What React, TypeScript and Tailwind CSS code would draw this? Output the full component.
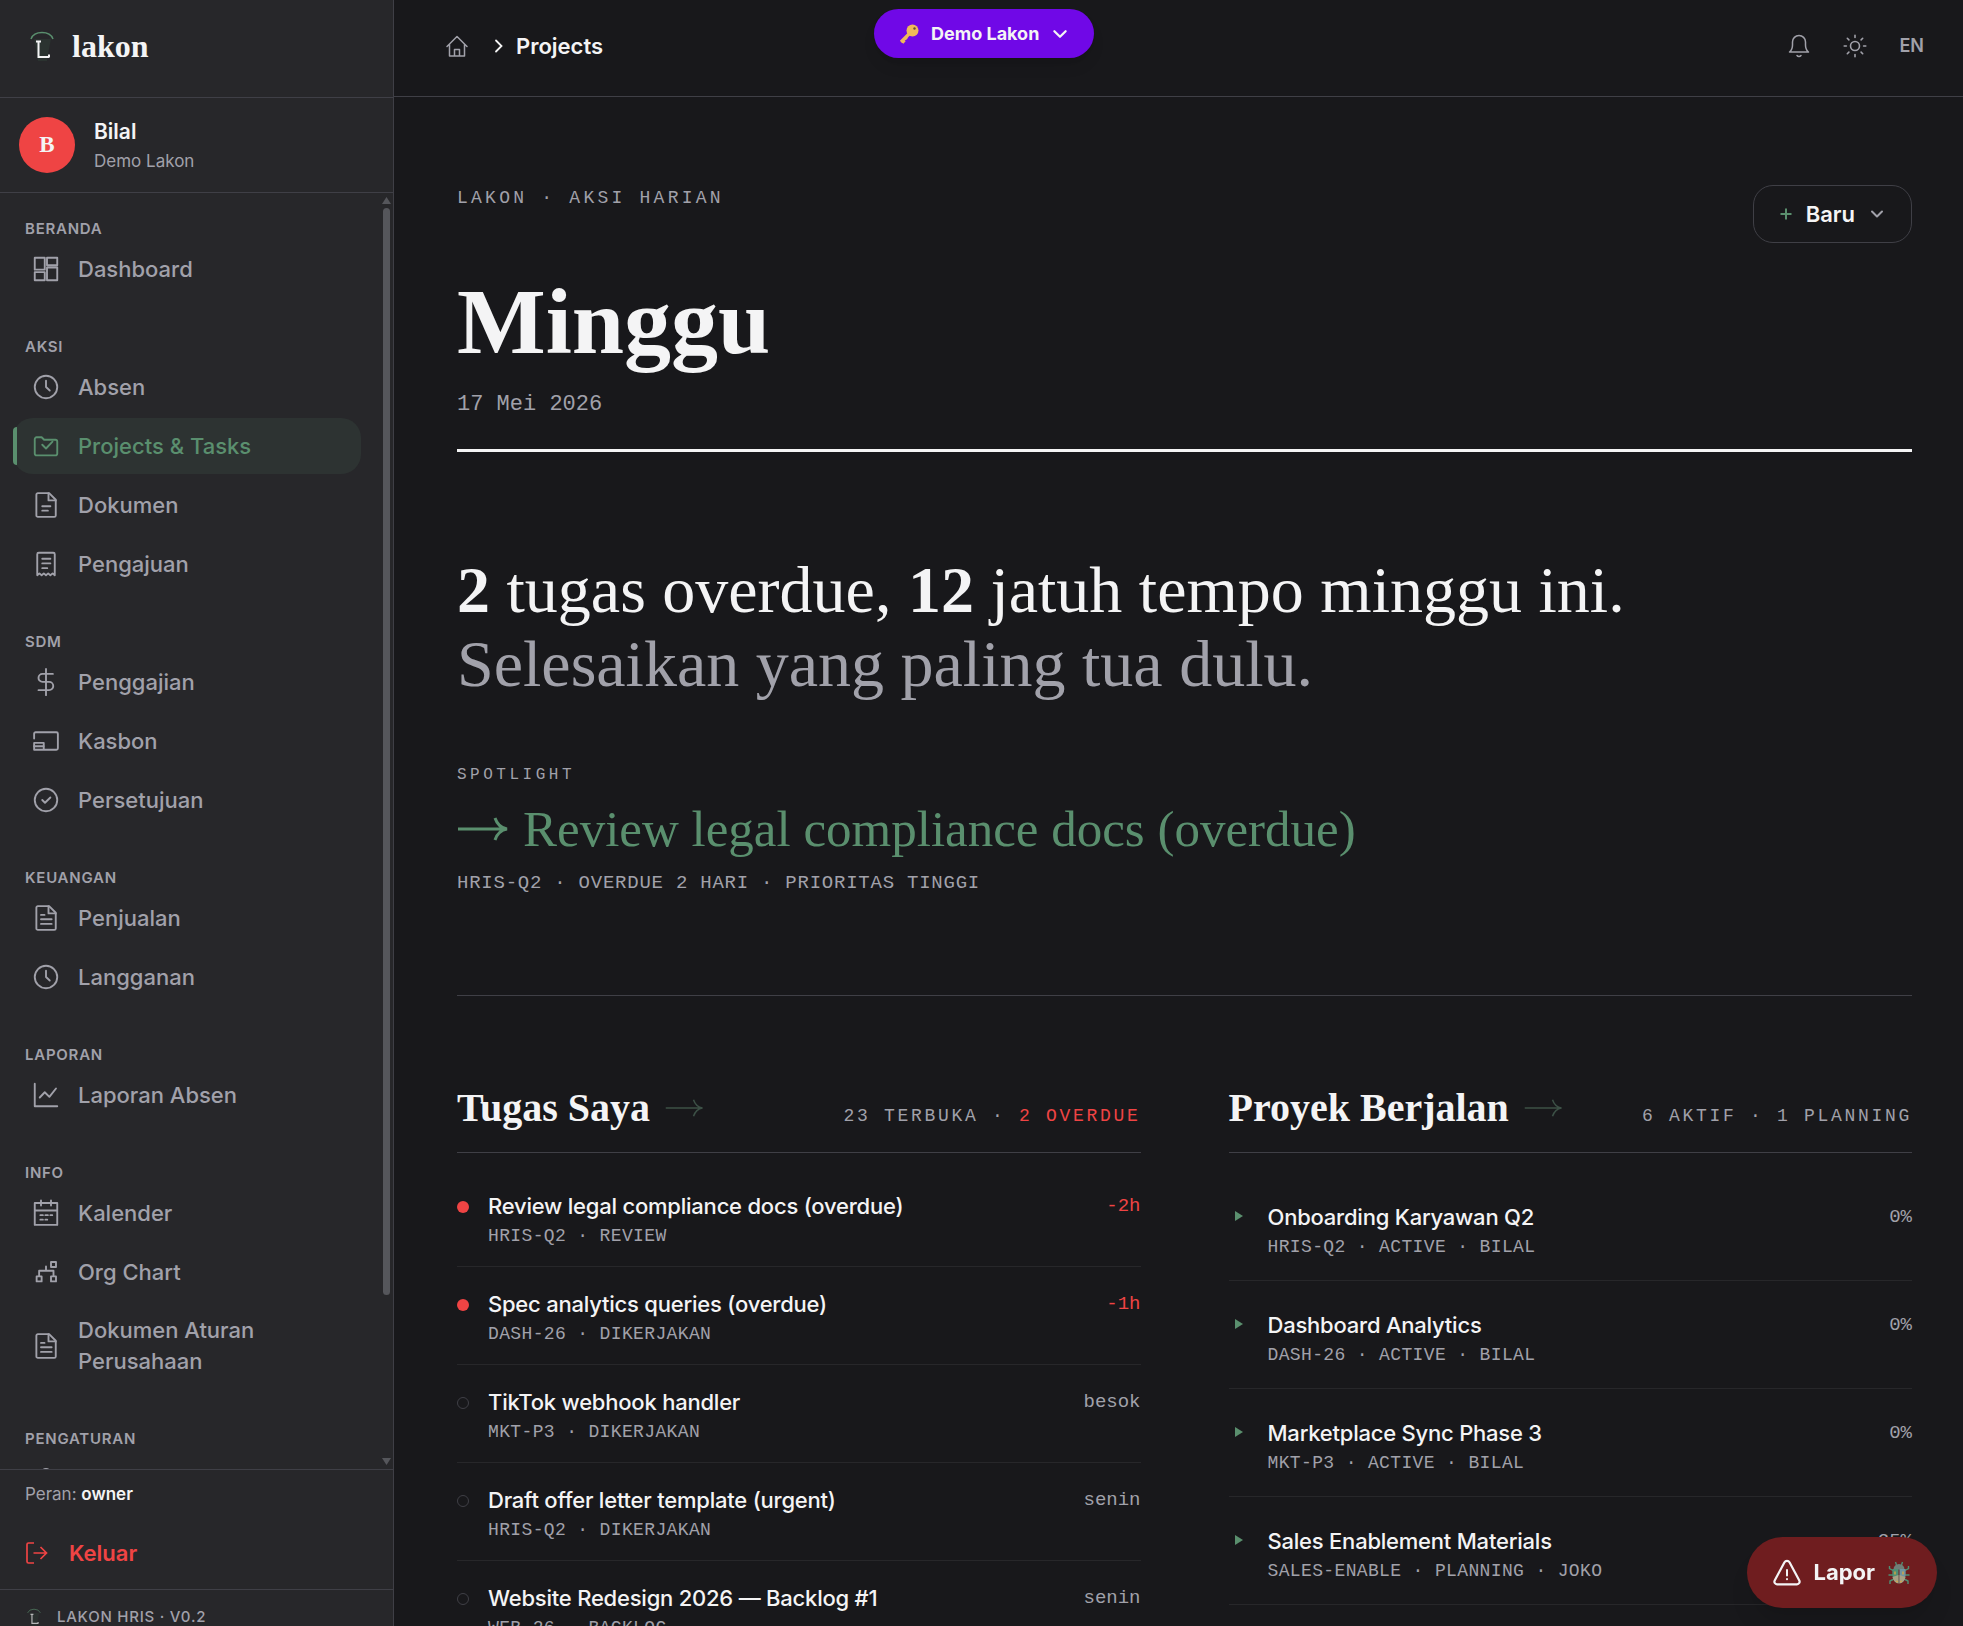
import type { ReactNode } from 'react';

type IconName =
  | 'grid'
  | 'clock'
  | 'folder'
  | 'doc'
  | 'receipt'
  | 'dollar'
  | 'cash'
  | 'approve'
  | 'docText'
  | 'chart'
  | 'calendar'
  | 'org'
  | 'user';

// 24x24 outline set used by the side menu
const ICONS: Record<IconName, ReactNode> = {
  grid: (
    <path d="M3 3h8v9.5H3zM12.8 3H21v6h-8.2zM12.8 10.8H21V21h-8.2zM3 14.5h8V21H3z" />
  ),
  clock: (
    <>
      <circle cx="12" cy="12" r="9" />
      <path d="M12 7v5l3 2.8" />
    </>
  ),
  folder: (
    <>
      <path d="M3 6.5A1.5 1.5 0 0 1 4.5 5h4l2 2h9A1.5 1.5 0 0 1 21 8.5V18a1.500 1.500 0 0 1-1.500 1.500h-15A1.500 1.500 0 0 1 3 18z" />
      <path d="M9 11l3 3 5.200-5.500" />
    </>
  ),
  doc: (
    <>
      <path d="M5.500 2.500h9l5.300 5.300V20.300a1.200 1.200 0 0 1-1.200 1.200H5.500a1.200 1.200 0 0 1-1.200-1.200V3.700a1.200 1.200 0 0 1 1.200-1.200z" />
      <path d="M14 2.500v5.800h5.800M9 13h6.500M9 16.500h4.500" />
    </>
  ),
  receipt: (
    <>
      <path d="M5 21V4.200A1.200 1.200 0 0 1 6.200 3h11.600A1.200 1.200 0 0 1 19 4.200V21l-1.750-1.500L15.500 21l-1.750-1.500L12 21l-1.750-1.500L8.500 21l-1.750-1.500z" />
      <path d="M9 7.800h6.500M9 11.500h6.500M9 15.300h4" />
    </>
  ),
  dollar: (
    <path d="M12 1.500v21M17.500 5.500H9.200a3.200 3.200 0 0 0 0 6.400h5.300a3.300 3.300 0 0 1 0 6.600H6" />
  ),
  cash: (
    <>
      <path d="M2.500 10V6.200A1.200 1.200 0 0 1 3.700 5h16.600a1.200 1.200 0 0 1 1.200 1.200v11.600a1.200 1.200 0 0 1-1.200 1.200H2.500v-5.500h7.700V19" />
      <path d="M2.500 16.200h7.500" />
    </>
  ),
  approve: (
    <>
      <circle cx="12" cy="12" r="9" />
      <path d="M9 12l2.200 2.200 4.300-4.200" />
    </>
  ),
  docText: (
    <>
      <path d="M5.500 2.500h9l5.300 5.300V20.300a1.200 1.200 0 0 1-1.200 1.200H5.500a1.200 1.200 0 0 1-1.200-1.200V3.700a1.200 1.200 0 0 1 1.200-1.200z" />
      <path d="M14 2.500v5.800h5.800M8 9.500h2.800M8 13h8.500M8 16.700h8.500" />
    </>
  ),
  chart: <path d="M3 3v18h18M7 14l4-4.200 3.700 3.700L20 6.800" />,
  calendar: (
    <>
      <path d="M3 4h18v17.500H3zM3 10h18M8 2v4M16 2v4" />
      <path d="M7.500 13.700h2M11.500 13.700h2M15.500 13.700h1.500M7.500 17.300h2M11.500 17.300h1.500" />
    </>
  ),
  org: (
    <path d="M16 4h4v4h-4zM4.500 15.500h4v4h-4zM16 15.500h4v4h-4zM12 7.500V11M6.500 15.500V11H18v4.500" />
  ),
  user: (
    <>
      <circle cx="12" cy="8" r="4" />
      <path d="M4 21c0-4 3.500-6 8-6s8 2 8 6" />
    </>
  ),
};

type NavItem = { label: string; icon: IconName; active?: boolean };

const NAV: { title: string; items: NavItem[] }[] = [
  { title: 'BERANDA', items: [{ label: 'Dashboard', icon: 'grid' }] },
  {
    title: 'AKSI',
    items: [
      { label: 'Absen', icon: 'clock' },
      { label: 'Projects & Tasks', icon: 'folder', active: true },
      { label: 'Dokumen', icon: 'doc' },
      { label: 'Pengajuan', icon: 'receipt' },
    ],
  },
  {
    title: 'SDM',
    items: [
      { label: 'Penggajian', icon: 'dollar' },
      { label: 'Kasbon', icon: 'cash' },
      { label: 'Persetujuan', icon: 'approve' },
    ],
  },
  {
    title: 'KEUANGAN',
    items: [
      { label: 'Penjualan', icon: 'docText' },
      { label: 'Langganan', icon: 'clock' },
    ],
  },
  { title: 'LAPORAN', items: [{ label: 'Laporan Absen', icon: 'chart' }] },
  {
    title: 'INFO',
    items: [
      { label: 'Kalender', icon: 'calendar' },
      { label: 'Org Chart', icon: 'org' },
      { label: 'Dokumen Aturan Perusahaan', icon: 'docText' },
    ],
  },
  { title: 'PENGATURAN', items: [{ label: '', icon: 'user' }] },
];

const TASKS = [
  { title: 'Review legal compliance docs (overdue)', meta: 'HRIS-Q2 · REVIEW', due: '-2h', late: true },
  { title: 'Spec analytics queries (overdue)', meta: 'DASH-26 · DIKERJAKAN', due: '-1h', late: true },
  { title: 'TikTok webhook handler', meta: 'MKT-P3 · DIKERJAKAN', due: 'besok', late: false },
  { title: 'Draft offer letter template (urgent)', meta: 'HRIS-Q2 · DIKERJAKAN', due: 'senin', late: false },
  { title: 'Website Redesign 2026 — Backlog #1', meta: 'WEB-26 · BACKLOG', due: 'senin', late: false },
];

const PROJECTS = [
  { title: 'Onboarding Karyawan Q2', meta: 'HRIS-Q2 · ACTIVE · BILAL', progress: '0%' },
  { title: 'Dashboard Analytics', meta: 'DASH-26 · ACTIVE · BILAL', progress: '0%' },
  { title: 'Marketplace Sync Phase 3', meta: 'MKT-P3 · ACTIVE · BILAL', progress: '0%' },
  { title: 'Sales Enablement Materials', meta: 'SALES-ENABLE · PLANNING · JOKO', progress: '25%' },
];

const serif = "font-['Liberation_Serif',serif]";
const mono = "font-['Liberation_Mono',monospace]";

function Icon({ name }: { name: IconName }) {
  return (
    <svg
      className="h-[30px] w-[30px] shrink-0"
      viewBox="0 0 24 24"
      fill="none"
      stroke="currentColor"
      strokeWidth="1.5"
      strokeLinecap="round"
      strokeLinejoin="round"
    >
      {ICONS[name]}
    </svg>
  );
}

function Logo({ className }: { className: string }) {
  return (
    <svg className={className} viewBox="0 0 24 32" fill="none">
      <path d="M4 9h17l-2 10-2 12H8L6 19z" fill="#2b3330" />
      <path d="M1 9a11.500 9 0 0 1 22 0" stroke="#5a8f6e" strokeWidth="1.500" />
      <path d="M6 11.500h5M8.500 11.500v15.500h11M19 27v-2.500" stroke="#f4f4f5" strokeWidth="2" />
    </svg>
  );
}

function LongArrow({ className, strokeWidth }: { className: string; strokeWidth: number }) {
  return (
    <svg className={className} viewBox="0 0 52 24" fill="none" stroke="currentColor" strokeWidth={strokeWidth}>
      <path d="M1 12h48M38 1c2 6 6 10 12 11-6 1-10 5-12 11" />
    </svg>
  );
}

function Chevron({ className }: { className: string }) {
  return (
    <svg
      className={className}
      viewBox="0 0 16 16"
      fill="none"
      stroke="currentColor"
      strokeWidth="2"
      strokeLinecap="round"
      strokeLinejoin="round"
    >
      <path d="M3 5.500l5 5 5-5" />
    </svg>
  );
}

function Sidebar() {
  return (
    <aside className="flex w-[394px] shrink-0 flex-col border-r border-[#3f3f46] bg-[#27272a]">
      <div className="flex h-[98px] shrink-0 items-center gap-[18px] border-b border-[#3f3f46] pb-[6px] pl-[30px]">
        <Logo className="h-8 w-6" />
        <span className={`${serif} text-[32px] leading-10 font-bold text-zinc-100`}>lakon</span>
      </div>

      <div className="flex h-[95px] shrink-0 items-center gap-[19px] border-b border-[#3f3f46] pl-[19px]">
        <div
          className={`${serif} flex h-14 w-14 items-center justify-center rounded-full bg-[#ef4444] text-[23px] font-bold text-zinc-100`}
        >
          B
        </div>
        <div className="pt-[2px]">
          <p className="text-[21px] leading-[30px] font-semibold text-zinc-100">Bilal</p>
          <p className="text-[17px] leading-7 text-[#a1a1aa]">Demo Lakon</p>
        </div>
      </div>

      <div className="flex min-h-0 flex-1">
        <nav className="flex flex-1 flex-col gap-[38px] overflow-hidden pt-6 pl-[13px]">
          {NAV.map((group) => (
            <section key={group.title} className="shrink-0">
              <h2 className="pl-3 text-[15px] leading-6 font-semibold tracking-[0.05em] text-[#a1a1aa]">
                {group.title}
              </h2>
              <ul className="flex flex-col gap-[3px]">
                {group.items.map((item) => (
                  <li key={item.label} className="relative">
                    {item.active && (
                      <span className="absolute top-[9px] left-0 h-[38px] w-1 rounded-l-sm bg-[#5a8f6e]" />
                    )}
                    <a
                      href="#"
                      className={`flex min-h-14 items-center gap-[17px] rounded-[20px] py-3 pr-10 pl-[18px] text-[22px] leading-[31px] font-medium ${
                        item.active ? 'bg-[#2d3332] text-[#5a8f6e]' : 'text-[#a1a1aa]'
                      }`}
                    >
                      <Icon name={item.icon} />
                      {item.label}
                    </a>
                  </li>
                ))}
              </ul>
            </section>
          ))}
        </nav>
        <div className="flex w-8 flex-col items-end justify-between py-1 pr-[2px]">
          <svg className="h-2 w-[9px]" viewBox="0 0 9 8" fill="#55565b">
            <path d="M4.500 0L9 7H0z" />
          </svg>
          <div className="mt-[3px] mr-px w-[7px] flex-1">
            <div className="h-[87%] rounded-full bg-[#55565b]" />
          </div>
          <svg className="h-2 w-[9px]" viewBox="0 0 9 8" fill="#55565b">
            <path d="M0 1h9L4.500 8z" />
          </svg>
        </div>
      </div>

      <div className="flex h-[120px] shrink-0 flex-col gap-5 border-t border-[#3f3f46] pt-[10px] pl-[25px]">
        <p className="text-[17px] leading-7 text-[#a1a1aa]">
          Peran: <strong className="font-semibold text-zinc-100">owner</strong>
        </p>
        <button className="flex items-center gap-5 text-[22px] leading-[50px] font-semibold text-[#ef4444]">
          <svg className="h-6 w-6" viewBox="0 0 24 24" fill="none" stroke="currentColor" strokeWidth="1.700">
            <path d="M9 2H3.500A1.500 1.500 0 0 0 2 3.500v17A1.500 1.500 0 0 0 3.500 22H9M8.500 12h13M15.500 6l6 6-6 6" />
          </svg>
          Keluar
        </button>
      </div>
      <div className="flex h-[37px] shrink-0 items-start gap-4 overflow-hidden border-t border-[#3f3f46] pt-[15px] pl-[27px]">
        <Logo className="mt-[2px] h-5 w-[14px] opacity-70" />
        <span className="text-[15px] leading-6 font-medium tracking-[0.05em] text-[#a1a1aa]">LAKON HRIS · V0.2</span>
      </div>
    </aside>
  );
}

function TopBar() {
  return (
    <header className="relative flex h-[97px] shrink-0 items-center justify-between border-b border-[#3f3f46] pr-[39px] pb-[5px] pl-[51px]">
      <div className="flex items-center gap-[22px]">
        <a href="#" aria-label="Beranda" className="text-[#a1a1aa]">
          <svg
            className="h-6 w-6"
            viewBox="0 0 24 24"
            fill="none"
            stroke="currentColor"
            strokeWidth="1.500"
            strokeLinecap="round"
            strokeLinejoin="round"
          >
            <path d="M2 12.500L12 2.500l10 10M4.500 10.500V22h15V10.500M9.500 22v-6.500h5V22" />
          </svg>
        </a>
        <div className="flex items-center gap-[9px] text-[22px] leading-8 font-semibold text-zinc-100">
          <svg
            className="h-4 w-4"
            viewBox="0 0 16 16"
            fill="none"
            stroke="currentColor"
            strokeWidth="1.800"
            strokeLinecap="round"
          >
            <path d="M5 2.500L10.500 8 5 13.500" />
          </svg>
          Projects
        </div>
      </div>

      <button className="absolute top-[9px] left-[480px] flex h-[49px] items-center gap-3 rounded-full bg-[#7008e7] px-[25px] text-[18px] font-bold text-zinc-100 shadow-lg">
        <svg className="h-5 w-5" viewBox="0 0 20 20" fill="none">
          <path d="M10.500 9.500L2 18M3.500 16.500l2 2M6.500 13.500l1.500 1.500" stroke="#f0b95a" strokeWidth="3.200" />
          <circle cx="13.500" cy="6.500" r="6" fill="#f0b95a" />
          <circle cx="15.500" cy="4.500" r="1.200" fill="#6b5030" />
        </svg>
        Demo Lakon
        <Chevron className="h-[18px] w-[18px]" />
      </button>

      <div className="flex items-center gap-8 text-[#a1a1aa]">
        <button aria-label="Notifikasi">
          <svg
            className="h-6 w-6"
            viewBox="0 0 24 24"
            fill="none"
            stroke="currentColor"
            strokeWidth="1.500"
            strokeLinecap="round"
            strokeLinejoin="round"
          >
            <path d="M2.500 18c2-1.500 3-4 3-7V8a6.500 6.500 0 0 1 13 0v3c0 3 1 5.500 3 7zM10 21.500c1 1.200 3 1.200 4 0" />
          </svg>
        </button>
        <button aria-label="Tema">
          <svg
            className="h-6 w-6"
            viewBox="0 0 24 24"
            fill="none"
            stroke="currentColor"
            strokeWidth="1.600"
            strokeLinecap="round"
          >
            <circle cx="12" cy="12" r="4.500" />
            <path d="M12 1.200v2.200M12 20.600v2.200M1.200 12h2.200M20.600 12h2.200M4.300 4.300l1.600 1.600M18.100 18.100l1.600 1.600M4.300 19.700l1.600-1.600M18.100 5.900l1.600-1.600" />
          </svg>
        </button>
        <button className="text-[18px] leading-6 font-semibold">EN</button>
      </div>
    </header>
  );
}

function SectionHead({ title, children }: { title: string; children: ReactNode }) {
  return (
    <div className="flex items-baseline justify-between border-b border-[#3f3f46] pb-[18px]">
      <h2 className={`${serif} flex items-center gap-[14px] text-[40px] leading-[52px] font-bold text-zinc-100`}>
        {title}
        <LongArrow className="h-[18px] w-[41px] text-[#3c5046]" strokeWidth={2} />
      </h2>
      <p className={`${mono} text-[18px] leading-7 tracking-[0.15em] text-[#a1a1aa]`}>{children}</p>
    </div>
  );
}

export default function App() {
  return (
    <div className="flex h-screen overflow-hidden bg-[#18181b] font-['Inter',sans-serif] text-zinc-100">
      <Sidebar />

      <div className="flex min-w-0 flex-1 flex-col">
        <TopBar />

        <main className="min-h-0 flex-1 overflow-hidden pt-[88px] pr-[51px] pl-[63px]">
          <div className="flex items-start justify-between">
            <div>
              <p className={`${mono} text-[18px] leading-[26px] tracking-[0.18em] text-[#a1a1aa]`}>
                LAKON · AKSI HARIAN
              </p>
              <h1 className={`${serif} mt-[62px] text-[94px] leading-[96px] font-bold`}>Minggu</h1>
              <p className={`${mono} mt-5 text-[22px] leading-8 text-[#a1a1aa]`}>17 Mei 2026</p>
            </div>
            <button className="flex h-[58px] items-center gap-[14px] rounded-[20px] border border-[#3f3f46] px-[26px] text-[22px] font-semibold">
              <svg className="h-3 w-3" viewBox="0 0 12 12" stroke="#5a8f6e" strokeWidth="2">
                <path d="M6 0.500v11M0.500 6h11" />
              </svg>
              Baru
              <Chevron className="h-4 w-4 text-[#a1a1aa]" />
            </button>
          </div>

          <hr className="mt-7 border-t-[3px] border-zinc-100" />

          <p className={`${serif} mt-[101px] text-[66px] leading-[74px]`}>
            <strong>2</strong> tugas overdue, <strong>12</strong> jatuh tempo minggu ini.
            <br />
            <span className="text-[#a1a1aa]">Selesaikan yang paling tua dulu.</span>
          </p>

          <p className={`${mono} mt-[62px] text-[16px] leading-6 tracking-[0.22em] text-[#a1a1aa]`}>SPOTLIGHT</p>
          <a
            href="#"
            className={`${serif} mt-[10px] flex items-center gap-[14px] text-[51px] leading-[64px] text-[#5a8f6e]`}
          >
            <LongArrow className="h-6 w-[52px]" strokeWidth={3} />
            Review legal compliance docs (overdue)
          </a>
          <p className={`${mono} mt-2 text-[19px] leading-7 tracking-[0.04em] text-[#a1a1aa]`}>
            HRIS-Q2 · OVERDUE 2 HARI · PRIORITAS TINGGI
          </p>

          <hr className="mt-[98px] border-[#3f3f46]" />

          <div className="mt-[86px] grid grid-cols-2 gap-[88px]">
            <section>
              <SectionHead title="Tugas Saya">
                23 TERBUKA · <span className="text-[#ef4444]">2 OVERDUE</span>
              </SectionHead>
              <ul className="pt-4">
                {TASKS.map((t) => (
                  <li key={t.title} className="flex items-start border-b border-[#27272a] pt-[21px] pb-4">
                    <span
                      className={`mt-[11px] mr-[19px] h-3 w-3 shrink-0 rounded-full ${
                        t.late ? 'bg-[#ef4444]' : 'border border-[#3f3f46]'
                      }`}
                    />
                    <div className="flex-1">
                      <p className="text-[22px] leading-8 font-medium tracking-[-0.01em]">{t.title}</p>
                      <p className={`${mono} text-[18px] leading-7 tracking-[0.02em] text-[#a1a1aa]`}>{t.meta}</p>
                    </div>
                    <span className={`${mono} text-[19px] leading-8 ${t.late ? 'text-[#ef4444]' : 'text-[#a1a1aa]'}`}>
                      {t.due}
                    </span>
                  </li>
                ))}
              </ul>
            </section>

            <section>
              <SectionHead title="Proyek Berjalan">6 AKTIF · 1 PLANNING</SectionHead>
              <ul className="pt-5">
                {PROJECTS.map((p) => (
                  <li key={p.title} className="flex items-start border-b border-[#27272a] pt-7 pb-[19px] pl-[6px]">
                    <svg className="mt-[10px] mr-[25px] h-[10px] w-2 shrink-0" viewBox="0 0 8 10" fill="#5a8f6e">
                      <path d="M0 0l8 5-8 5z" />
                    </svg>
                    <div className="flex-1">
                      <p className="text-[22px] leading-8 font-medium tracking-[-0.01em]">{p.title}</p>
                      <p className={`${mono} text-[18px] leading-7 tracking-[0.02em] text-[#a1a1aa]`}>{p.meta}</p>
                    </div>
                    <span className={`${mono} text-[19px] leading-8 text-[#a1a1aa]`}>{p.progress}</span>
                  </li>
                ))}
              </ul>
            </section>
          </div>
        </main>
      </div>

      <button className="fixed right-[26px] bottom-[18px] flex h-[71px] items-center gap-3 rounded-full bg-[#6f1d1f] px-[26px] text-[22px] font-bold text-zinc-100 shadow-xl">
        <svg
          className="h-7 w-7"
          viewBox="0 0 28 28"
          fill="none"
          stroke="currentColor"
          strokeWidth="2.200"
          strokeLinecap="round"
          strokeLinejoin="round"
        >
          <path d="M11.500 3.300L1.700 21.500a2.600 2.600 0 0 0 2.300 3.800h20a2.600 2.600 0 0 0 2.300-3.800L16.500 3.300a2.900 2.900 0 0 0-5 0z" />
          <path d="M14 11v5.500M14 20v.2" strokeWidth="2" />
        </svg>
        Lapor
        <svg className="h-6 w-6" viewBox="0 0 24 24" fill="none">
          <path
            d="M7 10L2.500 7.500V5M17 10l4.500-2.500V5M6 14H1.500M18 14h4.500M7 18l-4 2v3M17 18l4 2v3M9.500 4L8.500 1M14.500 4l1-3"
            stroke="#4f8f74"
            strokeWidth="1.400"
          />
          <path d="M6.500 8.500a5.500 5.500 0 0 1 11 0z" fill="#6f8078" />
          <path d="M11.500 8v14.500C7 22 4.500 17 5.500 8z" fill="#4f8f74" />
          <path d="M12.500 8v14.500c4.500-.5 7-5.500 6-14.500z" fill="#6f93a0" />
          <path d="M11.500 14v8.500C8.500 22 6.300 19.500 5.500 16zM12.500 14v8.500c3-.5 5.200-3 6-6.500z" fill="#a8a184" />
          <path d="M8 10.500v3M16 10.500v3M9.500 20l1 1M14.500 20l-1 1" stroke="#e0a83c" strokeWidth="1.300" />
        </svg>
      </button>
    </div>
  );
}
